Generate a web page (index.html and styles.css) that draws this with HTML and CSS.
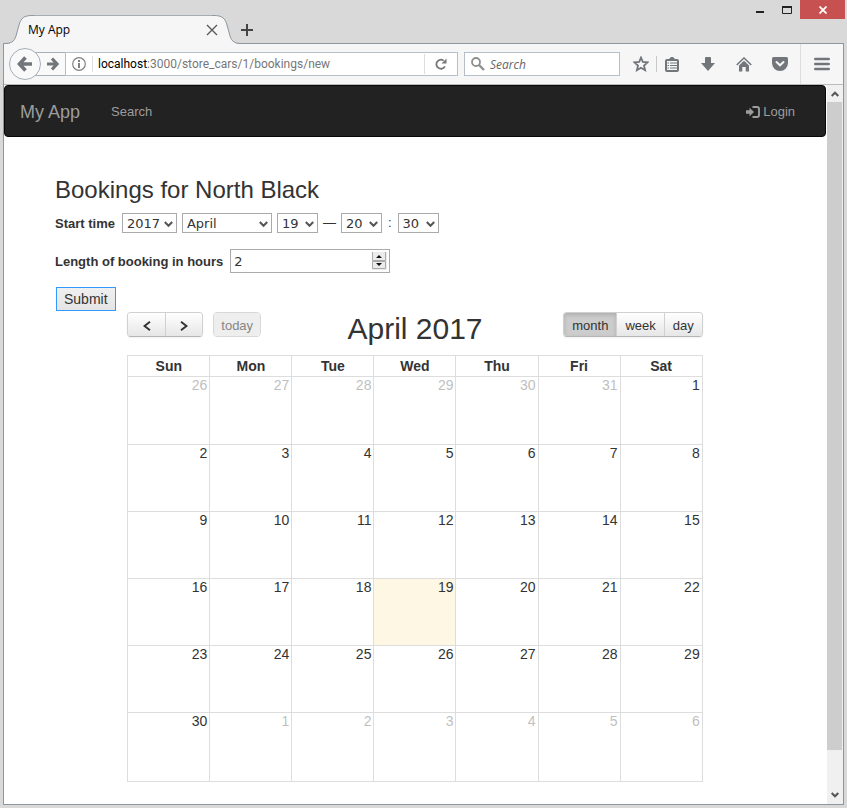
FILE: index.html
```html
<!DOCTYPE html>
<html lang="en">
<head>
<meta charset="utf-8">
<meta name="viewport" content="width=device-width, initial-scale=1">
<title>My App</title>
<link rel="stylesheet" href="styles.css">
</head>
<body>
<div class="frame">
  <header class="titlebar">
    <div class="tab">
      <svg class="tab-left" width="30" height="29" viewBox="0 0 30 29" aria-hidden="true"><path class="tab-fill" d="M0 29C7 29 10 27 12 21L15 10C17 3 20 .5 28 .5H30V29Z"/><path class="tab-line" d="M0 28.5C7 28.5 10 27 12 21L15 10C17 3 20 .5 28 .5H30"/></svg>
      <div class="tab-body">
        <span>My App</span>
        <button class="bare" type="button" aria-label="Close tab"><svg width="12" height="12" viewBox="0 0 12 12"><path d="M1 1L11 11M11 1L1 11" stroke="#5a5a5a" stroke-width="1.4"/></svg></button>
      </div>
      <svg class="tab-right" width="30" height="29" viewBox="0 0 30 29" aria-hidden="true"><path class="tab-fill" d="M30 29C23 29 20 27 18 21L15 10C13 3 10 .5 2 .5H0V29Z"/><path class="tab-line" d="M30 28.5C23 28.5 20 27 18 21L15 10C13 3 10 .5 2 .5H0"/></svg>
    </div>
    <button class="bare new-tab" type="button" aria-label="New tab"><svg width="12" height="12" viewBox="0 0 12 12"><path d="M6 0V12M0 6H12" stroke="#444" stroke-width="2"/></svg></button>
    <div class="window-buttons">
      <button class="bare win" type="button" aria-label="Minimize"><svg width="8" height="8" viewBox="0 0 8 8"><path d="M0 6H8" stroke="#222" stroke-width="2"/></svg></button>
      <button class="bare win" type="button" aria-label="Maximize"><svg width="10" height="8" viewBox="0 0 10 8"><path d="M.5 0V7.5H9.5V0" fill="none" stroke="#222"/><path d="M0 1H10" stroke="#222" stroke-width="2"/></svg></button>
      <button class="bare win close" type="button" aria-label="Close"><svg width="8" height="8" viewBox="0 0 8 8"><path d="M.5 .5L7.5 7.5M7.5 .5L.5 7.5" stroke="#fff" stroke-width="1.8"/></svg></button>
    </div>
  </header>

  <div class="window">
    <div class="toolbar">
      <button class="back" type="button" aria-label="Back"><svg width="16" height="16" viewBox="0 0 16 16"><path d="M8.5 1.5L2.5 8L8.5 14.5M3 8H15" fill="none" stroke="#72767b" stroke-width="3.6"/></svg></button>
      <button class="forward" type="button" aria-label="Forward"><svg width="14" height="14" viewBox="0 0 14 14"><path d="M6 1.5L11 7L6 12.5M1 7H11" fill="none" stroke="#72767b" stroke-width="3.2"/></svg></button>
      <div class="address">
        <svg class="info" width="14" height="14" viewBox="0 0 14 14" aria-hidden="true"><circle cx="7" cy="7" r="6.3" fill="none" stroke="#808080" stroke-width="1.2"/><path d="M7 3V5M7 6V11" stroke="#808080" stroke-width="2"/></svg>
        <a class="url" href="#"><b>localhost</b>:3000/store_cars/1/bookings/new</a>
        <button class="bare reload" type="button" aria-label="Reload"><svg width="12" height="12" viewBox="0 0 12 12"><path d="M9.9 8.3A4.5 4.5 0 1 1 8.6 2.6" fill="none" stroke="#777" stroke-width="1.8"/><path d="M11.5 .5V5.5H6.5Z" fill="#777"/></svg></button>
      </div>
      <label class="find"><svg width="14" height="14" viewBox="0 0 14 14"><circle cx="5" cy="5" r="4" fill="none" stroke="#8f8f8f" stroke-width="1.8"/><path d="M8 8L13 13" stroke="#8f8f8f" stroke-width="2.4"/></svg><input type="text" placeholder="Search" aria-label="Search the web"></label>
      <div class="tools">
        <button class="bare star" type="button" aria-label="Bookmark"><svg width="16" height="16" viewBox="0 0 16 16"><path d="M8 1.6L9.8 5.9L14.6 6.3L11 9.5L12.1 14.2L8 11.7L3.9 14.2L5 9.5L1.4 6.3L6.2 5.9Z" fill="none" stroke="#72767b" stroke-width="1.8"/></svg></button>
        <span class="divider"></span>
        <button class="bare clips" type="button" aria-label="Bookmarks list"><svg width="14" height="15" viewBox="0 0 14 15"><path d="M4 3V2L6 0H8L10 2V3Z" fill="#72767b"/><rect x="1" y="3" width="12" height="11" rx="1" fill="none" stroke="#72767b" stroke-width="2"/><path d="M5 6H12M5 8.5H12M5 11H12M2.5 6H4M2.5 8.5H4M2.5 11H4" stroke="#72767b"/></svg></button>
        <button class="bare tool" type="button" aria-label="Downloads"><svg width="14" height="14" viewBox="0 0 14 14"><path d="M4 1Q4 0 5 0H9Q10 0 10 1V6H14L7 14L0 6H4Z" fill="#72767b"/></svg></button>
        <button class="bare tool" type="button" aria-label="Home"><svg width="16" height="15" viewBox="0 0 16 15"><path d="M.7 8L8 1L15.3 8" fill="none" stroke="#72767b" stroke-width="1.5"/><path d="M3 8.5L8 3.8L13 8.5V14.5H9.7V10H6.3V14.5H3Z" fill="#72767b"/></svg></button>
        <button class="bare tool" type="button" aria-label="Pocket"><svg width="16" height="14" viewBox="0 0 16 14"><path d="M1.5 0H14.5Q16 0 16 1.5V6A8 8 0 0 1 0 6V1.5Q0 0 1.5 0Z" fill="#72767b"/><path d="M4.5 5L8 8.3L11.5 5" fill="none" stroke="#f6f6f6" stroke-width="2" stroke-linecap="round"/></svg></button>
        <button class="bare menu" type="button" aria-label="Menu"><svg width="16" height="14" viewBox="0 0 16 14"><path d="M1.3 2H14.7M1.3 7H14.7M1.3 12H14.7" stroke="#72767b" stroke-width="2.6" stroke-linecap="round"/></svg></button>
      </div>
    </div>

    <div class="viewport">
      <main class="page">
        <nav class="navbar">
          <a class="brand" href="#">My App</a>
          <a href="#">Search</a>
          <a class="login" href="#"><svg width="14" height="12" viewBox="0 0 14 12" aria-hidden="true"><path d="M0 4.3H3.5V1.8L8 6L3.5 10.2V7.7H0Z" fill="currentColor"/><path d="M6.5 1H11Q13 1 13 3V9Q13 11 11 11H6.5" fill="none" stroke="currentColor" stroke-width="1.9"/></svg>Login</a>
        </nav>

        <form class="booking">
          <h3>Bookings for North Black</h3>
          <div class="row times">
            <label for="year">Start time</label>
            <span class="pick year"><select id="year"><option>2017</option></select><svg width="9" height="7" viewBox="0 0 9 7"><path d="M.8 1L4.5 4.8L8.2 1"/></svg></span>
            <span class="pick month"><select aria-label="Month"><option>April</option></select><svg width="9" height="7" viewBox="0 0 9 7"><path d="M.8 1L4.5 4.8L8.2 1"/></svg></span>
            <span class="pick"><select aria-label="Day"><option>19</option></select><svg width="9" height="7" viewBox="0 0 9 7"><path d="M.8 1L4.5 4.8L8.2 1"/></svg></span>
            <span>—</span>
            <span class="pick"><select aria-label="Hour"><option>20</option></select><svg width="9" height="7" viewBox="0 0 9 7"><path d="M.8 1L4.5 4.8L8.2 1"/></svg></span>
            <span class="colon">:</span>
            <span class="pick"><select aria-label="Minute"><option>30</option></select><svg width="9" height="7" viewBox="0 0 9 7"><path d="M.8 1L4.5 4.8L8.2 1"/></svg></span>
          </div>
          <div class="row length">
            <label for="hours">Length of booking in hours</label>
            <span class="number"><input id="hours" type="number" value="2"><svg width="15" height="18" viewBox="0 0 15 18" aria-hidden="true"><rect width="15" height="18" fill="#ececec"/><path d="M.5 0V8.5H13.5V0M.5 9.5V16.5H13.5V9.5Z" fill="none" stroke="#aaa"/><path d="M4 6L7 3L10 6ZM4 11L7 14L10 11Z" fill="#111"/></svg></span>
          </div>
          <button class="submit" type="button">Submit</button>
        </form>

        <section class="calendar">
          <div class="cal-head">
            <div class="side">
              <div class="group arrows">
                <button type="button" aria-label="Previous month"><svg width="8" height="10" viewBox="0 0 8 10"><path d="M7 .8L1.5 5L7 9.2" fill="none" stroke="#333" stroke-width="2"/></svg></button><button type="button" aria-label="Next month"><svg width="8" height="10" viewBox="0 0 8 10"><path d="M1 .8L6.5 5L1 9.2" fill="none" stroke="#333" stroke-width="2"/></svg></button>
              </div>
              <div class="group today"><button type="button" disabled>today</button></div>
            </div>
            <h2>April 2017</h2>
            <div class="side end">
              <div class="group views"><button class="active" type="button">month</button><button type="button">week</button><button type="button">day</button></div>
            </div>
          </div>
          <table>
            <thead><tr><th>Sun</th><th>Mon</th><th>Tue</th><th>Wed</th><th>Thu</th><th>Fri</th><th>Sat</th></tr></thead>
            <tbody>
              <tr><td class="other">26</td><td class="other">27</td><td class="other">28</td><td class="other">29</td><td class="other">30</td><td class="other">31</td><td>1</td></tr>
              <tr><td>2</td><td>3</td><td>4</td><td>5</td><td>6</td><td>7</td><td>8</td></tr>
              <tr><td>9</td><td>10</td><td>11</td><td>12</td><td>13</td><td>14</td><td>15</td></tr>
              <tr><td>16</td><td>17</td><td>18</td><td class="now">19</td><td>20</td><td>21</td><td>22</td></tr>
              <tr><td>23</td><td>24</td><td>25</td><td>26</td><td>27</td><td>28</td><td>29</td></tr>
              <tr><td>30</td><td class="other">1</td><td class="other">2</td><td class="other">3</td><td class="other">4</td><td class="other">5</td><td class="other">6</td></tr>
            </tbody>
          </table>
        </section>
      </main>
      <div class="scrollbar" aria-hidden="true">
        <svg width="8" height="6" viewBox="0 0 8 6"><path d="M.7 5L4 1.7L7.3 5"/></svg>
        <span class="thumb"></span>
        <svg width="8" height="6" viewBox="0 0 8 6"><path d="M.7 1L4 4.3L7.3 1"/></svg>
      </div>
    </div>
  </div>
</div>
</body>
</html>
```
FILE: styles.css
```css
* { box-sizing: border-box; }

body {
  margin: 0;
  background: #d9d9d9;
  color: #333;
  font: 13px/20px "Liberation Sans", Arial, sans-serif;
}

svg { display: block; flex: none; }
a { color: inherit; text-decoration: none; }
button, input, select { font: inherit; color: inherit; margin: 0; }

.bare {
  display: flex;
  align-items: center;
  justify-content: center;
  padding: 0;
  border: 0;
  background: none;
}

.frame {
  display: flex;
  flex-direction: column;
  min-height: 100vh;
  padding: 0 3px 3px;
}

/* Title bar */
.titlebar {
  display: flex;
  align-items: flex-end;
  height: 43px;
  font: 12px/16px "Open Sans", "Segoe UI", sans-serif;
  color: #000;
}
.tab {
  display: flex;
  position: relative;
  z-index: 1;
  height: 29px;
  margin: 0 0 -1px 1px;
}
.tab-body {
  display: flex;
  align-items: center;
  justify-content: space-between;
  z-index: 1;
  width: 178px;
  border-top: 1px solid #a5acb2;
  background: #f6f6f6;
}
.tab-fill { fill: #f6f6f6; }
.tab-line { fill: none; stroke: #8d979f; }
.tab-body span { margin-left: -6px; }
.tab-body .bare { margin-right: -6px; }
.new-tab { width: 24px; height: 24px; margin: 0 0 1px -7px; }
.window-buttons { display: flex; align-self: flex-start; margin-left: auto; margin-right: -1px; }
.win { width: 27px; height: 19px; }
.close { width: 45px; background: #c75050; }

/* Browser window */
.window {
  display: flex;
  flex-direction: column;
  flex: 1;
  border: 1px solid #8d979f;
  background: #fff;
}
.toolbar {
  display: flex;
  align-items: center;
  height: 41px;
  padding-left: 5px;
  border-bottom: 1px solid #bbb;
  background: #f6f6f6;
  font: 12px/16px "Open Sans", "Segoe UI", sans-serif;
}
.back, .forward {
  display: flex;
  align-items: center;
  justify-content: center;
  padding: 0;
  border: 1px solid #a5b0bb;
  background: #f9f9f9;
}
.back { z-index: 1; width: 32px; height: 32px; border-radius: 50%; }
.forward { width: 31px; height: 24px; margin-left: -6px; padding-left: 4px; }
.address, .find {
  display: flex;
  align-items: center;
  height: 24px;
  border: 1px solid #b5bfca;
  background: #fff;
}
.address { flex: 1; min-width: 0; margin-left: -1px; }
.info { margin: 0 6px; }
.url {
  flex: 1;
  min-width: 0;
  overflow: hidden;
  white-space: nowrap;
  padding-left: 5px;
  border-left: 1px solid #ddd;
  color: #777;
  font-family: Roboto, "Segoe UI", sans-serif;
}
.url b { font-weight: 400; color: #000; }
.reload { width: 33px; height: 20px; border-left: 1px solid #ddd; }
.find { width: 156px; margin-left: 6px; padding-left: 6px; gap: 5px; }
.find input { width: 120px; padding: 1px 0 0; border: 0; outline: 0; background: none; }
.find input::placeholder { color: #666; font-style: italic; opacity: 1; }
.tools { display: flex; align-items: center; height: 40px; padding-left: 9px; }
.star { width: 24px; }
.divider { width: 1px; height: 16px; margin-left: 3px; background: #c8c8c8; }
.clips { width: 30px; margin-right: 3px; }
.tool { width: 36px; }
.menu { width: 43px; height: 40px; margin-left: 2px; border-left: 1px solid #ddd; }

.viewport { display: flex; flex: 1; }
.page { flex: 1; min-width: 0; padding-bottom: 22px; }

.scrollbar {
  display: flex;
  flex-direction: column;
  align-items: center;
  width: 17px;
  padding: 6px 1px 6px 0;
  gap: 5px;
  border-left: 1px solid #fff;
  background: #f0f0f0;
}
.scrollbar .thumb { flex: 1; width: 15px; margin-bottom: 37px; background: #cdcdcd; }
.scrollbar path, .pick path { fill: none; stroke: #555; stroke-width: 2; }

/* Site navigation */
.navbar {
  display: flex;
  align-items: center;
  height: 52px;
  padding: 2px 30px 0 15px;
  gap: 31px;
  border: 1px solid #080808;
  border-radius: 4px;
  background: #222;
  color: #9d9d9d;
}
.brand { font-size: 18px; }
.login { display: flex; align-items: center; gap: 3px; margin-left: auto; }

/* Booking form */
.booking { padding: 0 51px; }
h3 { margin: 39px 0 0; font-size: 24px; font-weight: 400; line-height: 28px; }
.row { display: flex; align-items: center; }
.row label { margin-right: 2px; padding-top: 2px; font-weight: 700; }
.times { gap: 5px; height: 20px; margin-top: 9px; }
.length { gap: 5px; height: 24px; margin-top: 16px; }
.pick { position: relative; width: 41px; }
.pick select {
  display: block;
  appearance: none;
  width: 100%;
  height: 20px;
  padding: 2px 4px 0;
  border: 1px solid #a9a9ae;
  border-radius: 0;
  background: #fff;
  font: 13px/16px "DejaVu Sans", Verdana, sans-serif;
}
.pick svg { position: absolute; top: 8px; right: 4px; pointer-events: none; }
.year { width: 55px; }
.month { width: 90px; }
.colon { padding: 0 1px; }
.number { position: relative; width: 160px; }
.number input {
  display: block;
  appearance: textfield;
  width: 100%;
  height: 24px;
  padding: 1px 3px 0;
  border: 1px solid #a9a9ae;
  background: #fff;
  font: 13px/20px "DejaVu Sans", Verdana, sans-serif;
}
.number input::-webkit-inner-spin-button { appearance: none; }
.number svg { position: absolute; top: 3px; right: 3px; pointer-events: none; }
.submit {
  display: block;
  height: 24px;
  margin: 14px 0 0 1px;
  padding: 0 7px;
  border: 1px solid #3399ff;
  background: linear-gradient(#f0f0f0, #e5e5e5);
  font-size: 14px;
  line-height: 22px;
}

/* Calendar */
.calendar { width: 70%; margin: 1px auto 0; }
.cal-head { display: flex; justify-content: space-between; height: 43px; }
.side { display: flex; flex: 1; gap: 10px; }
.end { justify-content: flex-end; }
h2 { margin: 0; font-size: 30px; font-weight: 400; line-height: 34px; }
.group {
  display: flex;
  height: 25px;
  border: 1px solid #d0d0d0;
  border-bottom-color: #b5b5b5;
  border-radius: 4px;
  overflow: hidden;
  box-shadow: 0 1px 2px rgba(0, 0, 0, .06);
}
.group button {
  display: flex;
  align-items: center;
  justify-content: center;
  padding: 2px 8px 0;
  border: 0;
  background: linear-gradient(#fff, #e6e6e6);
}
.group button + button { border-left: 1px solid #d0d0d0; }
.group.arrows button { width: 37px; }
.group .active { background: #ccc; box-shadow: inset 0 2px 4px rgba(0, 0, 0, .15); }
.today { border-color: #d8d8d8; box-shadow: none; }
.group.today button { padding: 2px 7px 0; background: #eee; color: #858585; }

table { width: 100%; table-layout: fixed; border-collapse: collapse; }
th, td { border: 1px solid #ddd; }
th { height: 21px; padding: 0; font-size: 14px; line-height: 20px; }
td { height: 67px; padding: 0 2px; text-align: right; vertical-align: top; line-height: 16px; font-size: 14px; }
tr:last-child td { height: 69px; }
tr:first-child td { height: 68px; }
.other { color: #bfbfbf; }
.now { background: #fdf7e3; }
```
